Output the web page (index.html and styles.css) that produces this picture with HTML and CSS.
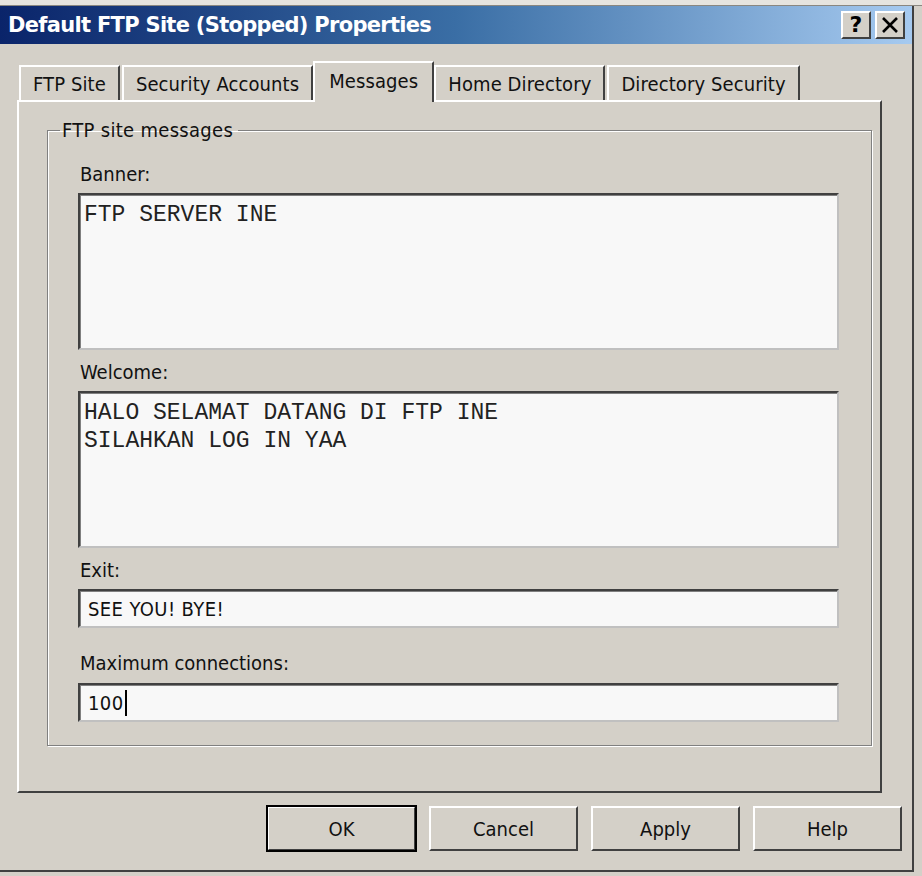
FILE: index.html
```html
<!DOCTYPE html>
<html>
<head>
    <title>Default FTP Site (Stopped) Properties</title>
    <link rel="stylesheet" href="styles.css">
</head>
<body>
    <div class="top-strip"></div>
    <div class="window">
        <header class="titlebar">
            <span class="title">Default FTP Site (Stopped) Properties</span>
            <div class="title-buttons">
                <span class="cap-btn">?</span>
                <span class="cap-btn close">
                    <svg width="18" height="18" viewBox="0 0 18 18">
                        <path d="M2 2 L16 16 M16 2 L2 16" stroke="#000" stroke-width="2.6"/>
                    </svg>
                </span>
            </div>
        </header>

        <nav class="tabs">
            <span class="tab">FTP Site</span>
            <span class="tab">Security Accounts</span>
            <span class="tab active">Messages</span>
            <span class="tab">Home Directory</span>
            <span class="tab">Directory Security</span>
        </nav>

        <section class="panel">
            <fieldset class="group">
                <legend>FTP site messages</legend>

                <label class="field-label first">Banner:</label>
                <div class="memo">FTP SERVER INE</div>

                <label class="field-label">Welcome:</label>
                <div class="memo">HALO SELAMAT DATANG DI FTP INE
SILAHKAN LOG IN YAA</div>

                <label class="field-label">Exit:</label>
                <div class="edit">SEE YOU! BYE!</div>

                <label class="field-label after-edit">Maximum connections:</label>
                <div class="edit">100<span class="caret"></span></div>
            </fieldset>
        </section>

        <footer class="buttons">
            <button class="btn default">OK</button>
            <button class="btn">Cancel</button>
            <button class="btn">Apply</button>
            <button class="btn">Help</button>
        </footer>
    </div>
</body>
</html>
```

FILE: styles.css
```css
body {
    margin: 0;
    background: #d4d0c8;
    font-family: 'DejaVu Sans Condensed', 'DejaVu Sans', sans-serif;
    font-size: 20px;
    line-height: 24px;
    color: #000;
    width: 922px;
    height: 876px;
    overflow: hidden;
}

.top-strip {
    height: 5px;
    background: #e6e4df;
    border-bottom: 1px solid #8a8780;
}

.window {
    width: 914px;
    height: 866px;
    border-right: 2px solid #404040;
    border-bottom: 2px solid #404040;
    box-sizing: border-box;
}

.titlebar {
    height: 38px;
    background: linear-gradient(to right, #0a246a, #3a6ea5 50%, #a6caf0);
    display: flex;
    align-items: center;
    justify-content: space-between;
    padding: 0 7px 0 8px;
}

.title {
    color: #fff;
    font-family: 'DejaVu Sans', sans-serif;
    font-weight: bold;
    font-size: 21px;
    letter-spacing: -0.7px;
}

.title-buttons {
    display: flex;
    gap: 4px;
}

.cap-btn {
    width: 30px;
    height: 28px;
    background: #d4d0c8;
    border: 2px solid;
    border-color: #fff #404040 #404040 #fff;
    box-sizing: border-box;
    display: flex;
    align-items: center;
    justify-content: center;
    font-weight: bold;
    font-size: 22px;
    font-family: 'DejaVu Sans', sans-serif;
}

.tabs {
    display: flex;
    padding-left: 19px;
    margin-top: 19px;
    height: 37px;
    align-items: flex-end;
}

.tab {
    height: 35px;
    padding: 0 12px;
    box-sizing: border-box;
    border: 2px solid;
    border-color: #fff #404040 transparent #fff;
    border-bottom: none;
    display: flex;
    align-items: center;
    margin-right: 2px;
    color: #111;
    letter-spacing: 0.1px;
}

.tab.active {
    height: 41px;
    margin: 0 0 -2px -2px;
    padding: 0 14px 4px;
    position: relative;
    z-index: 1;
    background: #d4d0c8;
}

.panel {
    margin-left: 17px;
    width: 865px;
    height: 693px;
    box-sizing: border-box;
    border: 2px solid;
    border-color: #fff #404040 #404040 #fff;
    padding: 16px 8px 0 28px;
}

.group {
    margin: 0;
    border: 1px solid #808080;
    box-shadow: inset 1px 1px 0 #fff, 1px 1px 0 #fff;
    height: 628px;
    box-sizing: border-box;
    padding: 0 32px 0 30px;
}

.group legend {
    padding: 0 5px 0 2px;
    margin-left: -18px;
    color: #111;
    letter-spacing: 0.3px;
}

.field-label {
    display: block;
    margin: 10px 0 7px 2px;
    color: #111;
}

.field-label.first {
    margin-top: 20px;
}

.field-label.after-edit {
    margin-top: 23px;
    margin-bottom: 8px;
}

.memo, .edit {
    background: #f8f8f8;
    border: 2px solid;
    border-color: #404040 #c0c0c0 #c0c0c0 #404040;
    box-shadow: inset 1px 1px 0 #808080;
    box-sizing: border-box;
}

.memo {
    height: 157px;
    padding: 6px 4px;
    white-space: pre;
    font-family: 'Liberation Mono', monospace;
    font-size: 23px;
    line-height: 28px;
    color: #222;
}

.edit {
    height: 39px;
    padding: 0 8px;
    display: flex;
    align-items: center;
    color: #111;
    letter-spacing: 0.4px;
}

.caret {
    display: inline-block;
    width: 2px;
    height: 26px;
    background: #000;
    margin-left: 1px;
}

.buttons {
    display: flex;
    justify-content: flex-end;
    gap: 13px;
    padding: 13px 10px 0 0;
}

.btn {
    width: 149px;
    height: 45px;
    background: #d4d0c8;
    font-family: inherit;
    font-size: 20px;
    color: #111;
    border: 2px solid;
    border-color: #fff #404040 #404040 #fff;
    box-sizing: border-box;
}

.btn.default {
    outline: 2px solid #000;
    outline-offset: -1px;
}
```
